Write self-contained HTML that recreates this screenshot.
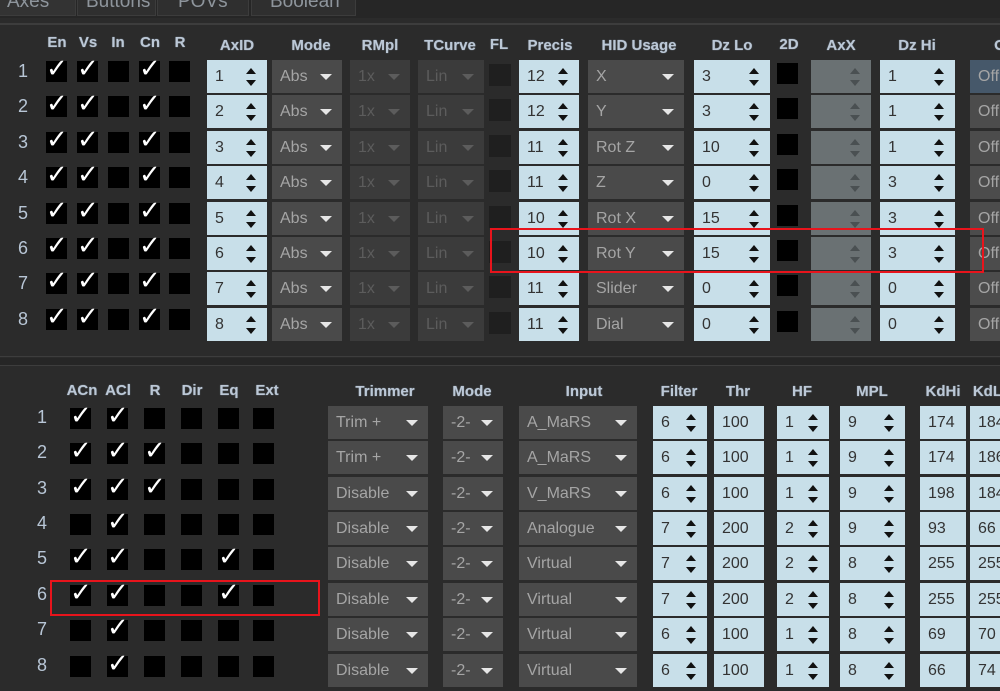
<!DOCTYPE html>
<html><head><meta charset="utf-8"><style>
*{margin:0;padding:0;box-sizing:border-box}
body{width:1000px;height:691px;background:#2b2b2b;font-family:"Liberation Sans",Arial,sans-serif;overflow:hidden;position:relative}
.tabs{position:absolute;left:0;top:0;width:1000px;height:18px;background:#262626}
.tab{position:absolute;top:-10px;height:26px;border:1px solid #3c3c3c;background:#2f2f2f;color:#8e959c;font-size:19px;line-height:22px;padding-left:8px}
.line{position:absolute;left:0;width:1000px;height:2px;background:#3d3d3d}
.h{position:absolute;color:#bcc8d6;font-size:15px;font-weight:bold;text-align:center;transform:translateX(-50%);white-space:nowrap;text-shadow:0 0 1px #8ea0b4}
.r{position:absolute;left:0;width:1000px;height:33px}
.n{position:absolute;color:#b8c6d6;font-size:18px;top:1px}
.c{position:absolute;width:21px;height:21px;background:#000;top:1px;color:#fff;font-family:"DejaVu Sans",sans-serif;font-size:26px;line-height:17px;text-align:center;overflow:visible}
.b{position:absolute;top:0;height:33px;font-size:16px;line-height:33px;padding-left:8px;color:#333}
.s{background:#c8dfe9}
.s:before{content:"";position:absolute;right:11px;top:8px;border:5px solid transparent;border-top:0;border-bottom:6px solid #111}
.s:after{content:"";position:absolute;right:11px;top:20px;border:5px solid transparent;border-bottom:0;border-top:6px solid #111}
.p{background:#c8dfe9}
.d{background:#4a4a4a;color:#a5a5a5}
.d:after{content:"";position:absolute;right:10px;top:14px;border:6px solid transparent;border-bottom:0;border-top:6px solid #e6e6e6}
.x{background:#3b3b3b;color:#5c5c5c}
.x:after{content:"";position:absolute;right:10px;top:14px;border:6px solid transparent;border-bottom:0;border-top:6px solid #5c5c5c}
.g{background:#6a7173}
.g:before{content:"";position:absolute;right:11px;top:8px;border:5px solid transparent;border-top:0;border-bottom:6px solid #4a5052}
.g:after{content:"";position:absolute;right:11px;top:20px;border:5px solid transparent;border-bottom:0;border-top:6px solid #4a5052}
.o{background:#4c4c4c;color:#a5a5a5}
.fl{position:absolute;top:4px;width:22px;height:22px;background:#1f1f1f}
.d2{position:absolute;top:3px;width:21px;height:21px;background:#000}
.red{position:absolute;border:2px solid #e8141c}
.sep{position:absolute;left:0;width:1000px;background:#262626}
</style></head><body>
<div class="tabs">
<div class="tab" style="left:-2px;width:78px;background:#333">Axes</div>
<div class="tab" style="left:77px;width:79px">Buttons</div>
<div class="tab" style="left:157px;width:92px;padding-left:20px">POVs</div>
<div class="tab" style="left:251px;width:105px;padding-left:18px">Boolean</div>
</div>
<div class="line" style="top:23px"></div>
<div class="sep" style="top:358px;height:7px"></div>
<div class="line" style="top:356px;height:1px"></div>
<div class="line" style="top:365px;height:1px"></div>

<div class="h" style="left:57px;top:34px">En</div><div class="h" style="left:88px;top:34px">Vs</div><div class="h" style="left:118px;top:34px">In</div><div class="h" style="left:150px;top:34px">Cn</div><div class="h" style="left:180px;top:34px">R</div>
<div class="h" style="left:237px;top:37px">AxID</div><div class="h" style="left:311px;top:37px">Mode</div><div class="h" style="left:380px;top:37px">RMpl</div><div class="h" style="left:450px;top:37px">TCurve</div><div class="h" style="left:499px;top:36px">FL</div><div class="h" style="left:550px;top:37px">Precis</div><div class="h" style="left:639px;top:37px">HID Usage</div><div class="h" style="left:732px;top:37px">Dz Lo</div><div class="h" style="left:789px;top:36px">2D</div><div class="h" style="left:841px;top:37px">AxX</div><div class="h" style="left:917px;top:37px">Dz Hi</div><div class="h" style="left:1000px;top:37px">O</div>

<div class="r" style="top:60px"><span class="n" style="left:18px">1</span><div class="c" style="left:46px">✓</div><div class="c" style="left:77px">✓</div><div class="c" style="left:108px"></div><div class="c" style="left:139px">✓</div><div class="c" style="left:169px"></div><div class="b s" style="left:207px;width:60px">1</div><div class="b d" style="left:272px;width:70px">Abs</div><div class="b x" style="left:350px;width:60px">1x</div><div class="b x" style="left:418px;width:66px">Lin</div><div class="fl" style="left:489px"></div><div class="b s" style="left:519px;width:60px">12</div><div class="b d" style="left:588px;width:96px">X</div><div class="b s" style="left:694px;width:76px">3</div><div class="d2" style="left:777px"></div><div class="b g" style="left:811px;width:60px"></div><div class="b s" style="left:880px;width:75px">1</div><div class="b o" style="left:970px;width:40px;background:#46586a">Off</div></div>
<div class="r" style="top:95px"><span class="n" style="left:18px">2</span><div class="c" style="left:46px">✓</div><div class="c" style="left:77px">✓</div><div class="c" style="left:108px"></div><div class="c" style="left:139px">✓</div><div class="c" style="left:169px"></div><div class="b s" style="left:207px;width:60px">2</div><div class="b d" style="left:272px;width:70px">Abs</div><div class="b x" style="left:350px;width:60px">1x</div><div class="b x" style="left:418px;width:66px">Lin</div><div class="fl" style="left:489px"></div><div class="b s" style="left:519px;width:60px">12</div><div class="b d" style="left:588px;width:96px">Y</div><div class="b s" style="left:694px;width:76px">3</div><div class="d2" style="left:777px"></div><div class="b g" style="left:811px;width:60px"></div><div class="b s" style="left:880px;width:75px">1</div><div class="b o" style="left:970px;width:40px">Off</div></div>
<div class="r" style="top:131px"><span class="n" style="left:18px">3</span><div class="c" style="left:46px">✓</div><div class="c" style="left:77px">✓</div><div class="c" style="left:108px"></div><div class="c" style="left:139px">✓</div><div class="c" style="left:169px"></div><div class="b s" style="left:207px;width:60px">3</div><div class="b d" style="left:272px;width:70px">Abs</div><div class="b x" style="left:350px;width:60px">1x</div><div class="b x" style="left:418px;width:66px">Lin</div><div class="fl" style="left:489px"></div><div class="b s" style="left:519px;width:60px">11</div><div class="b d" style="left:588px;width:96px">Rot Z</div><div class="b s" style="left:694px;width:76px">10</div><div class="d2" style="left:777px"></div><div class="b g" style="left:811px;width:60px"></div><div class="b s" style="left:880px;width:75px">1</div><div class="b o" style="left:970px;width:40px">Off</div></div>
<div class="r" style="top:166px"><span class="n" style="left:18px">4</span><div class="c" style="left:46px">✓</div><div class="c" style="left:77px">✓</div><div class="c" style="left:108px"></div><div class="c" style="left:139px">✓</div><div class="c" style="left:169px"></div><div class="b s" style="left:207px;width:60px">4</div><div class="b d" style="left:272px;width:70px">Abs</div><div class="b x" style="left:350px;width:60px">1x</div><div class="b x" style="left:418px;width:66px">Lin</div><div class="fl" style="left:489px"></div><div class="b s" style="left:519px;width:60px">11</div><div class="b d" style="left:588px;width:96px">Z</div><div class="b s" style="left:694px;width:76px">0</div><div class="d2" style="left:777px"></div><div class="b g" style="left:811px;width:60px"></div><div class="b s" style="left:880px;width:75px">3</div><div class="b o" style="left:970px;width:40px">Off</div></div>
<div class="r" style="top:202px"><span class="n" style="left:18px">5</span><div class="c" style="left:46px">✓</div><div class="c" style="left:77px">✓</div><div class="c" style="left:108px"></div><div class="c" style="left:139px">✓</div><div class="c" style="left:169px"></div><div class="b s" style="left:207px;width:60px">5</div><div class="b d" style="left:272px;width:70px">Abs</div><div class="b x" style="left:350px;width:60px">1x</div><div class="b x" style="left:418px;width:66px">Lin</div><div class="fl" style="left:489px"></div><div class="b s" style="left:519px;width:60px">10</div><div class="b d" style="left:588px;width:96px">Rot X</div><div class="b s" style="left:694px;width:76px">15</div><div class="d2" style="left:777px"></div><div class="b g" style="left:811px;width:60px"></div><div class="b s" style="left:880px;width:75px">3</div><div class="b o" style="left:970px;width:40px">Off</div></div>
<div class="r" style="top:237px"><span class="n" style="left:18px">6</span><div class="c" style="left:46px">✓</div><div class="c" style="left:77px">✓</div><div class="c" style="left:108px"></div><div class="c" style="left:139px">✓</div><div class="c" style="left:169px"></div><div class="b s" style="left:207px;width:60px">6</div><div class="b d" style="left:272px;width:70px">Abs</div><div class="b x" style="left:350px;width:60px">1x</div><div class="b x" style="left:418px;width:66px">Lin</div><div class="fl" style="left:489px"></div><div class="b s" style="left:519px;width:60px">10</div><div class="b d" style="left:588px;width:96px">Rot Y</div><div class="b s" style="left:694px;width:76px">15</div><div class="d2" style="left:777px"></div><div class="b g" style="left:811px;width:60px"></div><div class="b s" style="left:880px;width:75px">3</div><div class="b o" style="left:970px;width:40px">Off</div></div>
<div class="r" style="top:272px"><span class="n" style="left:18px">7</span><div class="c" style="left:46px">✓</div><div class="c" style="left:77px">✓</div><div class="c" style="left:108px"></div><div class="c" style="left:139px">✓</div><div class="c" style="left:169px"></div><div class="b s" style="left:207px;width:60px">7</div><div class="b d" style="left:272px;width:70px">Abs</div><div class="b x" style="left:350px;width:60px">1x</div><div class="b x" style="left:418px;width:66px">Lin</div><div class="fl" style="left:489px"></div><div class="b s" style="left:519px;width:60px">11</div><div class="b d" style="left:588px;width:96px">Slider</div><div class="b s" style="left:694px;width:76px">0</div><div class="d2" style="left:777px"></div><div class="b g" style="left:811px;width:60px"></div><div class="b s" style="left:880px;width:75px">0</div><div class="b o" style="left:970px;width:40px">Off</div></div>
<div class="r" style="top:308px"><span class="n" style="left:18px">8</span><div class="c" style="left:46px">✓</div><div class="c" style="left:77px">✓</div><div class="c" style="left:108px"></div><div class="c" style="left:139px">✓</div><div class="c" style="left:169px"></div><div class="b s" style="left:207px;width:60px">8</div><div class="b d" style="left:272px;width:70px">Abs</div><div class="b x" style="left:350px;width:60px">1x</div><div class="b x" style="left:418px;width:66px">Lin</div><div class="fl" style="left:489px"></div><div class="b s" style="left:519px;width:60px">11</div><div class="b d" style="left:588px;width:96px">Dial</div><div class="b s" style="left:694px;width:76px">0</div><div class="d2" style="left:777px"></div><div class="b g" style="left:811px;width:60px"></div><div class="b s" style="left:880px;width:75px">0</div><div class="b o" style="left:970px;width:40px">Off</div></div>
<div class="red" style="left:490px;top:228px;width:494px;height:45px"></div>

<div class="h" style="left:82px;top:382px">ACn</div><div class="h" style="left:118px;top:382px">ACl</div><div class="h" style="left:155px;top:382px">R</div><div class="h" style="left:192px;top:382px">Dir</div><div class="h" style="left:229px;top:382px">Eq</div><div class="h" style="left:267px;top:382px">Ext</div>
<div class="h" style="left:385px;top:383px">Trimmer</div><div class="h" style="left:472px;top:383px">Mode</div><div class="h" style="left:584px;top:383px">Input</div><div class="h" style="left:679px;top:383px">Filter</div><div class="h" style="left:738px;top:383px">Thr</div><div class="h" style="left:802px;top:383px">HF</div><div class="h" style="left:872px;top:383px">MPL</div><div class="h" style="left:943px;top:383px">KdHi</div><div class="h" style="left:992px;top:383px">KdLo</div>

<div class="r" style="top:406px"><span class="n" style="left:37px">1</span><div class="c" style="left:70px;top:2px">✓</div><div class="c" style="left:107px;top:2px">✓</div><div class="c" style="left:144px;top:2px"></div><div class="c" style="left:181px;top:2px"></div><div class="c" style="left:218px;top:2px"></div><div class="c" style="left:253px;top:2px"></div><div class="b d" style="left:328px;width:100px">Trim +</div><div class="b d" style="left:443px;width:60px">-2-</div><div class="b d" style="left:519px;width:118px">A_MaRS</div><div class="b s" style="left:653px;width:54px">6</div><div class="b p" style="left:714px;width:50px">100</div><div class="b s" style="left:777px;width:52px">1</div><div class="b s" style="left:840px;width:65px">9</div><div class="b p" style="left:920px;width:46px">174</div><div class="b p" style="left:970px;width:40px">184</div></div>
<div class="r" style="top:441px"><span class="n" style="left:37px">2</span><div class="c" style="left:70px;top:2px">✓</div><div class="c" style="left:107px;top:2px">✓</div><div class="c" style="left:144px;top:2px">✓</div><div class="c" style="left:181px;top:2px"></div><div class="c" style="left:218px;top:2px"></div><div class="c" style="left:253px;top:2px"></div><div class="b d" style="left:328px;width:100px">Trim +</div><div class="b d" style="left:443px;width:60px">-2-</div><div class="b d" style="left:519px;width:118px">A_MaRS</div><div class="b s" style="left:653px;width:54px">6</div><div class="b p" style="left:714px;width:50px">100</div><div class="b s" style="left:777px;width:52px">1</div><div class="b s" style="left:840px;width:65px">9</div><div class="b p" style="left:920px;width:46px">174</div><div class="b p" style="left:970px;width:40px">186</div></div>
<div class="r" style="top:477px"><span class="n" style="left:37px">3</span><div class="c" style="left:70px;top:2px">✓</div><div class="c" style="left:107px;top:2px">✓</div><div class="c" style="left:144px;top:2px">✓</div><div class="c" style="left:181px;top:2px"></div><div class="c" style="left:218px;top:2px"></div><div class="c" style="left:253px;top:2px"></div><div class="b d" style="left:328px;width:100px">Disable</div><div class="b d" style="left:443px;width:60px">-2-</div><div class="b d" style="left:519px;width:118px">V_MaRS</div><div class="b s" style="left:653px;width:54px">6</div><div class="b p" style="left:714px;width:50px">100</div><div class="b s" style="left:777px;width:52px">1</div><div class="b s" style="left:840px;width:65px">9</div><div class="b p" style="left:920px;width:46px">198</div><div class="b p" style="left:970px;width:40px">184</div></div>
<div class="r" style="top:512px"><span class="n" style="left:37px">4</span><div class="c" style="left:70px;top:2px"></div><div class="c" style="left:107px;top:2px">✓</div><div class="c" style="left:144px;top:2px"></div><div class="c" style="left:181px;top:2px"></div><div class="c" style="left:218px;top:2px"></div><div class="c" style="left:253px;top:2px"></div><div class="b d" style="left:328px;width:100px">Disable</div><div class="b d" style="left:443px;width:60px">-2-</div><div class="b d" style="left:519px;width:118px">Analogue</div><div class="b s" style="left:653px;width:54px">7</div><div class="b p" style="left:714px;width:50px">200</div><div class="b s" style="left:777px;width:52px">2</div><div class="b s" style="left:840px;width:65px">9</div><div class="b p" style="left:920px;width:46px">93</div><div class="b p" style="left:970px;width:40px">66</div></div>
<div class="r" style="top:547px"><span class="n" style="left:37px">5</span><div class="c" style="left:70px;top:2px">✓</div><div class="c" style="left:107px;top:2px">✓</div><div class="c" style="left:144px;top:2px"></div><div class="c" style="left:181px;top:2px"></div><div class="c" style="left:218px;top:2px">✓</div><div class="c" style="left:253px;top:2px"></div><div class="b d" style="left:328px;width:100px">Disable</div><div class="b d" style="left:443px;width:60px">-2-</div><div class="b d" style="left:519px;width:118px">Virtual</div><div class="b s" style="left:653px;width:54px">7</div><div class="b p" style="left:714px;width:50px">200</div><div class="b s" style="left:777px;width:52px">2</div><div class="b s" style="left:840px;width:65px">8</div><div class="b p" style="left:920px;width:46px">255</div><div class="b p" style="left:970px;width:40px">255</div></div>
<div class="r" style="top:583px"><span class="n" style="left:37px">6</span><div class="c" style="left:70px;top:2px">✓</div><div class="c" style="left:107px;top:2px">✓</div><div class="c" style="left:144px;top:2px"></div><div class="c" style="left:181px;top:2px"></div><div class="c" style="left:218px;top:2px">✓</div><div class="c" style="left:253px;top:2px"></div><div class="b d" style="left:328px;width:100px">Disable</div><div class="b d" style="left:443px;width:60px">-2-</div><div class="b d" style="left:519px;width:118px">Virtual</div><div class="b s" style="left:653px;width:54px">7</div><div class="b p" style="left:714px;width:50px">200</div><div class="b s" style="left:777px;width:52px">2</div><div class="b s" style="left:840px;width:65px">8</div><div class="b p" style="left:920px;width:46px">255</div><div class="b p" style="left:970px;width:40px">255</div></div>
<div class="r" style="top:618px"><span class="n" style="left:37px">7</span><div class="c" style="left:70px;top:2px"></div><div class="c" style="left:107px;top:2px">✓</div><div class="c" style="left:144px;top:2px"></div><div class="c" style="left:181px;top:2px"></div><div class="c" style="left:218px;top:2px"></div><div class="c" style="left:253px;top:2px"></div><div class="b d" style="left:328px;width:100px">Disable</div><div class="b d" style="left:443px;width:60px">-2-</div><div class="b d" style="left:519px;width:118px">Virtual</div><div class="b s" style="left:653px;width:54px">6</div><div class="b p" style="left:714px;width:50px">100</div><div class="b s" style="left:777px;width:52px">1</div><div class="b s" style="left:840px;width:65px">8</div><div class="b p" style="left:920px;width:46px">69</div><div class="b p" style="left:970px;width:40px">70</div></div>
<div class="r" style="top:654px"><span class="n" style="left:37px">8</span><div class="c" style="left:70px;top:2px"></div><div class="c" style="left:107px;top:2px">✓</div><div class="c" style="left:144px;top:2px"></div><div class="c" style="left:181px;top:2px"></div><div class="c" style="left:218px;top:2px"></div><div class="c" style="left:253px;top:2px"></div><div class="b d" style="left:328px;width:100px">Disable</div><div class="b d" style="left:443px;width:60px">-2-</div><div class="b d" style="left:519px;width:118px">Virtual</div><div class="b s" style="left:653px;width:54px">6</div><div class="b p" style="left:714px;width:50px">100</div><div class="b s" style="left:777px;width:52px">1</div><div class="b s" style="left:840px;width:65px">8</div><div class="b p" style="left:920px;width:46px">66</div><div class="b p" style="left:970px;width:40px">74</div></div>
<div class="red" style="left:50px;top:580px;width:270px;height:36px"></div>
</body></html>
